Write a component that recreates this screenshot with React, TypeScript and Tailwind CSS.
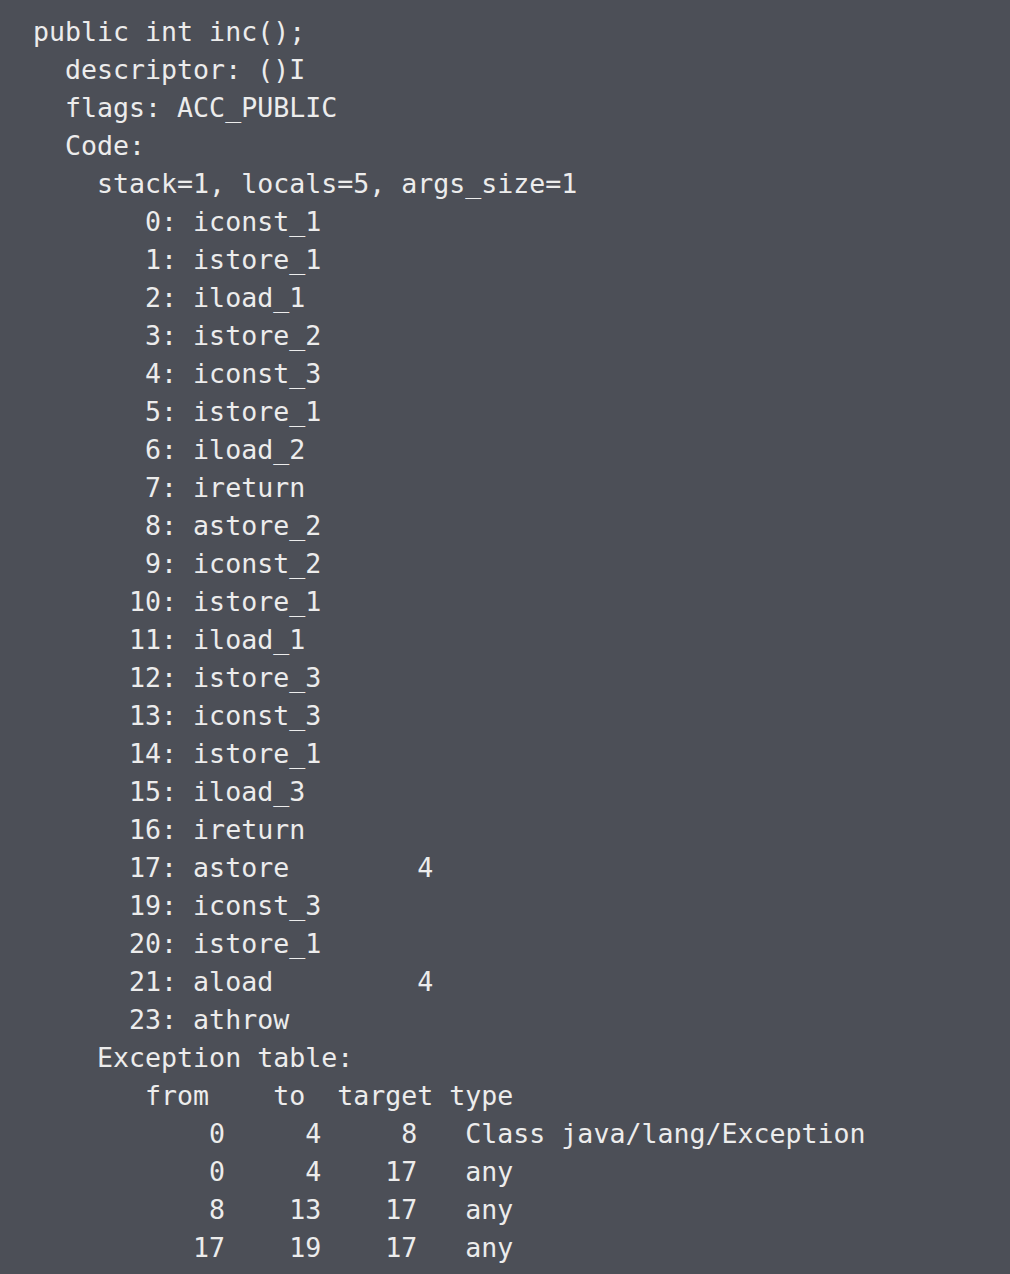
const lines = [
  "public int inc();",
  "  descriptor: ()I",
  "  flags: ACC_PUBLIC",
  "  Code:",
  "    stack=1, locals=5, args_size=1",
  "       0: iconst_1",
  "       1: istore_1",
  "       2: iload_1",
  "       3: istore_2",
  "       4: iconst_3",
  "       5: istore_1",
  "       6: iload_2",
  "       7: ireturn",
  "       8: astore_2",
  "       9: iconst_2",
  "      10: istore_1",
  "      11: iload_1",
  "      12: istore_3",
  "      13: iconst_3",
  "      14: istore_1",
  "      15: iload_3",
  "      16: ireturn",
  "      17: astore        4",
  "      19: iconst_3",
  "      20: istore_1",
  "      21: aload         4",
  "      23: athrow",
  "    Exception table:",
  "       from    to  target type",
  "           0     4     8   Class java/lang/Exception",
  "           0     4    17   any",
  "           8    13    17   any",
  "          17    19    17   any",
  "    LineNumberTable:",
];

export default function App() {
  return (
    <div className="w-[1010px] h-[1274px] overflow-hidden bg-[#4c4f57]">
      <pre className="pt-[13px] pl-[33px] m-0 text-[26.6px] leading-[38px] text-[#ececec] font-['DejaVu_Sans_Mono',monospace] whitespace-pre">
        {lines.join("\n")}
      </pre>
    </div>
  );
}
